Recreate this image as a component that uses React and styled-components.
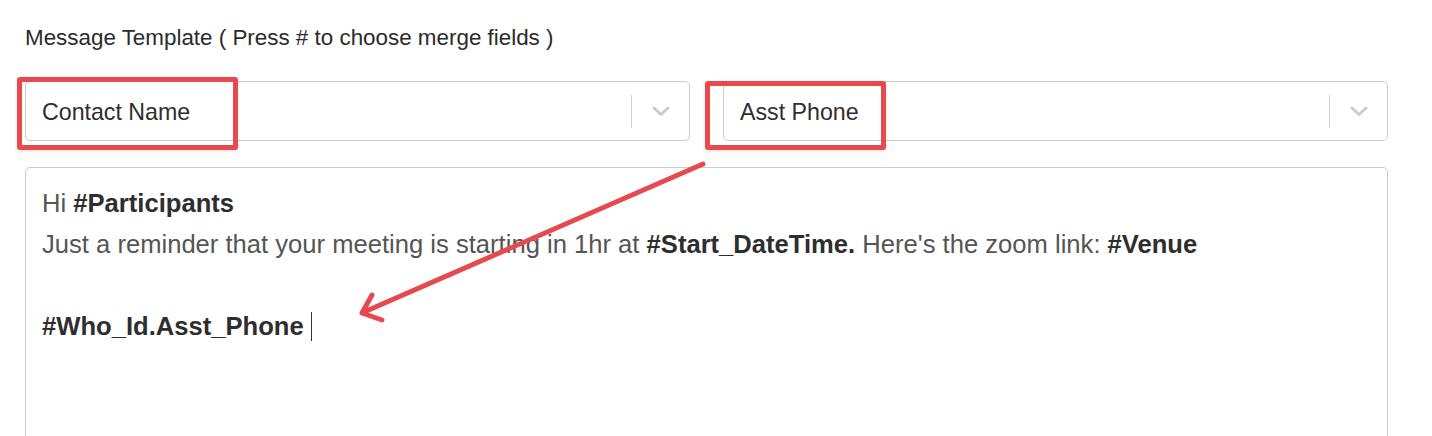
import React from "react";
import styled, { createGlobalStyle } from "styled-components";

const GlobalStyle = createGlobalStyle`
  html, body { margin: 0; padding: 0; background: #fff; overflow: hidden; }
  body { font-family: "Liberation Sans", Arial, sans-serif; }
`;

const Page = styled.div`
  position: relative;
  width: 1432px;
  height: 436px;
  overflow: hidden;
  box-sizing: border-box;
  padding: 26px 44px 0 25px;
`;

const Label = styled.div`
  font-size: 22.4px;
  line-height: 24px;
  color: #2b2b2b;
`;

const SelectRow = styled.div`
  display: grid;
  grid-template-columns: 1fr 1fr;
  gap: 33px;
  margin-top: 31px;
`;

const Select = styled.div`
  position: relative;
  height: 60px;
  box-sizing: border-box;
  border: 1px solid #cbcbcb;
  border-radius: 5px;
  display: flex;
  align-items: center;
  background: #fff;
`;

const Value = styled.div`
  flex: 1;
  padding: 2px 0 0 16px;
  font-size: 23.2px;
  color: #2e2e2e;
`;

const Separator = styled.span`
  width: 1px;
  height: 33px;
  background: #d2d2d2;
`;

const Indicator = styled.div`
  width: 57px;
  display: flex;
  justify-content: center;
  align-items: center;
`;

const Highlight = styled.div`
  position: absolute;
  left: ${({ $left }) => $left}px;
  top: ${({ $top }) => $top}px;
  width: ${({ $w }) => $w}px;
  height: ${({ $h }) => $h}px;
  box-sizing: border-box;
  border: 5px solid #e64a4f;
  border-radius: 3px;
  box-shadow: 0 1px 3px rgba(0, 0, 0, 0.15);
  pointer-events: none;
`;

const Editor = styled.div`
  margin-top: 26px;
  height: 300px;
  box-sizing: border-box;
  border: 1px solid #cbcbcb;
  border-radius: 5px;
  padding: 15px 16px;
  font-size: 25.6px;
  line-height: 41px;
  color: #555;
`;

const Line = styled.div`
  min-height: 41px;
`;

const Field = styled.b`
  color: #2e2e2e;
  font-weight: 700;
`;

const Caret = styled.span`
  display: inline-block;
  width: 0;
  height: 29px;
  border-left: 1.5px solid #333;
  margin-left: 7px;
  vertical-align: -6px;
`;

const Arrow = styled.svg`
  position: absolute;
  left: 0;
  top: 0;
  pointer-events: none;
`;

const Chevron = () => (
  <svg width="18" height="11" viewBox="0 0 18 11">
    <polyline points="2,2 9,8.5 16,2" fill="none" stroke="#cccccc" strokeWidth="3" strokeLinecap="round" strokeLinejoin="round" />
  </svg>
);

const MergeSelect = ({ value, box }) => (
  <Select>
    <Value>{value}</Value>
    <Separator />
    <Indicator>
      <Chevron />
    </Indicator>
    {box && <Highlight $left={box.left} $top={box.top} $w={box.w} $h={box.h} />}
  </Select>
);

export default function App() {
  return (
    <Page>
      <GlobalStyle />
      <Label>Message Template ( Press # to choose merge fields )</Label>
      <SelectRow>
        <MergeSelect value="Contact Name" box={{ left: -9, top: -5, w: 221, h: 73 }} />
        <MergeSelect value="Asst Phone" box={{ left: -19, top: -1, w: 181, h: 69 }} />
      </SelectRow>
      <Editor>
        <Line>
          Hi <Field>#Participants</Field>
        </Line>
        <Line>
          Just a reminder that your meeting is starting in 1hr at <Field>#Start_DateTime.</Field> Here's the zoom link: <Field>#Venue</Field>
        </Line>
        <Line />
        <Line>
          <Field>#Who_Id.Asst_Phone</Field>
          <Caret />
        </Line>
      </Editor>
      <Arrow width="1432" height="436" viewBox="0 0 1432 436">
        <g fill="none" stroke="#e64a4f" strokeWidth="5" strokeLinecap="round" strokeLinejoin="round">
          <line x1="703" y1="164" x2="364" y2="312" />
          <polyline points="372,295 362,313 382,320" />
        </g>
      </Arrow>
    </Page>
  );
}
